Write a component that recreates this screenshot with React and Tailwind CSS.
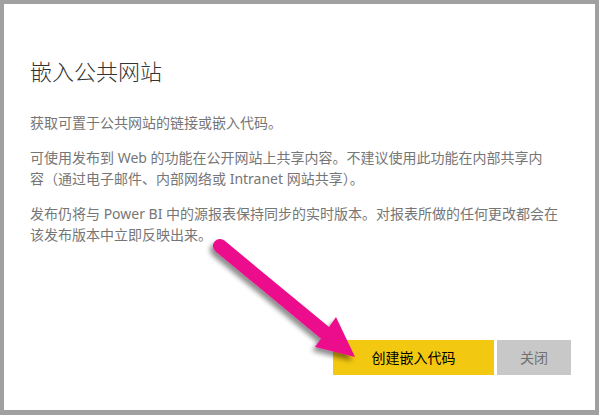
import React from "react";

export default function App() {
  const font = { fontFamily: '"Noto Sans", "Noto Sans CJK SC", sans-serif' };
  return (
    <div
      className="relative w-[599px] h-[415px] bg-white border-[#a0a0a0] border-t-4 border-l-4 border-r-4 border-b-[5px] flex flex-col pl-[26px] pr-[24px] overflow-hidden"
      style={font}
    >
      <h1 className="mt-[52px] text-[22px] leading-[30px] font-light text-[#333333]">嵌入公共网站</h1>
      <div className="mt-[26px] text-[14px] leading-[21px] text-[#767676]">
        <p className="whitespace-nowrap">获取可置于公共网站的链接或嵌入代码。</p>
        <p className="mt-[14px] whitespace-nowrap">
          可使用发布到 Web 的功能在公开网站上共享内容。不建议使用此功能在内部共享内
          <br />
          容（通过电子邮件、内部网络或 Intranet 网站共享）。
        </p>
        <p className="mt-[14px] whitespace-nowrap">
          发布仍将与 Power BI 中的源报表保持同步的实时版本。对报表所做的任何更改都会在
          <br />
          该发布版本中立即反映出来。
        </p>
      </div>
      <div className="mt-auto mb-[35px] flex justify-end gap-[3px]">
        <button className="w-[161px] h-[35px] bg-[#f2c811] text-[14px] text-black">创建嵌入代码</button>
        <button className="w-[74px] h-[35px] bg-[#c8c8c8] text-[14px] text-[#707070]">关闭</button>
      </div>
      <svg
        className="absolute left-[-4px] top-[-4px] pointer-events-none"
        width="599"
        height="415"
        viewBox="0 0 599 415"
      >
        <defs>
          <filter id="sh" x="-20%" y="-20%" width="140%" height="140%">
            <feGaussianBlur in="SourceAlpha" stdDeviation="2.5" />
            <feOffset dx="-3" dy="4" result="b" />
            <feComponentTransfer>
              <feFuncA type="linear" slope="0.45" />
            </feComponentTransfer>
            <feMerge>
              <feMergeNode />
              <feMergeNode in="SourceGraphic" />
            </feMerge>
          </filter>
        </defs>
        <g filter="url(#sh)">
          <line x1="220" y1="246" x2="324" y2="332" stroke="#ec0c8c" strokeWidth="14" strokeLinecap="round" />
          <polygon points="336,317 315,347 355,357" fill="#ec0c8c" />
        </g>
      </svg>
    </div>
  );
}
